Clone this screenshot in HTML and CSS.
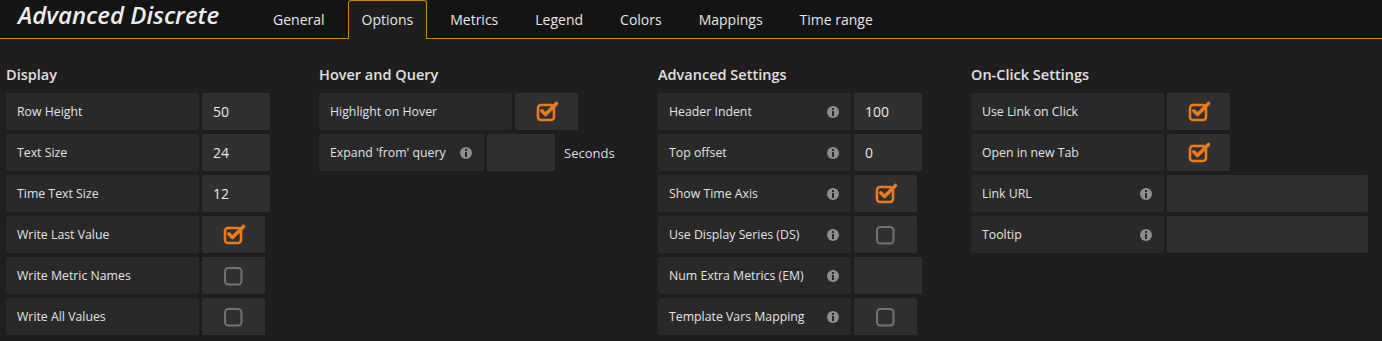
FILE: index.html
```html
<!DOCTYPE html>
<html lang="en">
<head>
    <meta charset="UTF-8">
    <title>Advanced Discrete - Options</title>
    <link rel="stylesheet" href="styles.css">
</head>
<body>
    <div class="panel-header">
        <h1 class="panel-title">Advanced Discrete</h1>
        <ul class="tabs">
            <li class="tab">General</li>
            <li class="tab active">Options</li>
            <li class="tab">Metrics</li>
            <li class="tab">Legend</li>
            <li class="tab">Colors</li>
            <li class="tab">Mappings</li>
            <li class="tab">Time range</li>
        </ul>
    </div>

    <div class="editor">
        <!-- Display -->
        <div class="section">
            <h5 class="section-heading">Display</h5>
            <div class="form-row"><span class="label w-193">Row Height</span><span class="input">50</span></div>
            <div class="form-row"><span class="label w-193">Text Size</span><span class="input">24</span></div>
            <div class="form-row"><span class="label w-193">Time Text Size</span><span class="input">12</span></div>
            <div class="form-row"><span class="label w-193">Write Last Value</span><span class="check on"></span></div>
            <div class="form-row"><span class="label w-193">Write Metric Names</span><span class="check"></span></div>
            <div class="form-row"><span class="label w-193">Write All Values</span><span class="check"></span></div>
        </div>

        <!-- Hover -->
        <div class="section">
            <h5 class="section-heading">Hover and Query</h5>
            <div class="form-row"><span class="label w-193">Highlight on Hover</span><span class="check on"></span></div>
            <div class="form-row"><span class="label w-165">Expand 'from' query <i class="info"></i></span><span class="input"></span><span class="suffix">Seconds</span></div>
        </div>

        <!-- Advanced -->
        <div class="section">
            <h5 class="section-heading">Advanced Settings</h5>
            <div class="form-row"><span class="label w-193">Header Indent <i class="info"></i></span><span class="input">100</span></div>
            <div class="form-row"><span class="label w-193">Top offset <i class="info"></i></span><span class="input">0</span></div>
            <div class="form-row"><span class="label w-193">Show Time Axis <i class="info"></i></span><span class="check on"></span></div>
            <div class="form-row"><span class="label w-193">Use Display Series (DS) <i class="info"></i></span><span class="check"></span></div>
            <div class="form-row"><span class="label w-193">Num Extra Metrics (EM) <i class="info"></i></span><span class="input"></span></div>
            <div class="form-row"><span class="label w-193">Template Vars Mapping <i class="info"></i></span><span class="check"></span></div>
        </div>

        <!-- On click -->
        <div class="section">
            <h5 class="section-heading">On-Click Settings</h5>
            <div class="form-row"><span class="label w-193">Use Link on Click</span><span class="check on"></span></div>
            <div class="form-row"><span class="label w-193">Open in new Tab</span><span class="check on"></span></div>
            <div class="form-row"><span class="label w-193">Link URL <i class="info"></i></span><span class="input wide"></span></div>
            <div class="form-row"><span class="label w-193">Tooltip <i class="info"></i></span><span class="input wide"></span></div>
        </div>
    </div>
</body>
</html>
```

FILE: styles.css
```css
body {
    margin: 0;
    background: #1f1d1e;
    color: #dedede;
    font-family: 'Open Sans', 'Liberation Sans', sans-serif;
    font-size: 13px;
}

/* header + tabs */
.panel-header {
    display: flex;
    align-items: flex-end;
    height: 38px;
    background: #141414;
    border-bottom: 1px solid #c8860d;
}
.panel-title {
    margin: 0;
    padding: 0 0 6px 18px;
    width: 241px;
    align-self: flex-start;
    font-size: 24px;
    font-style: italic;
    font-weight: 600;
    line-height: 30px;
    color: #ececec;
}
.tabs {
    display: flex;
    gap: 9px;
    list-style: none;
    margin: 0;
    padding: 0;
}
.tab {
    height: 37px;
    line-height: 38px;
    padding: 0 13px;
    font-size: 14px;
    color: #e6e6e6;
    border: 1px solid transparent;
    border-bottom: 0;
    border-radius: 3px 3px 0 0;
    margin-bottom: -1px;
}
.tab.active {
    background: #1f1d1e;
    border-color: #c8860d;
    height: 38px;
}

/* editor */
.editor {
    display: grid;
    grid-template-columns: 313px 339px 313px 1fr;
    padding: 27px 6px 0;
}
.section-heading {
    margin: 0 0 9px;
    font-size: 14.5px;
    font-weight: 600;
    line-height: 18px;
    color: #e0e0e0;
}
.form-row {
    display: flex;
    align-items: center;
    gap: 3px;
    height: 37px;
    margin-bottom: 4px;
}
.label {
    display: flex;
    align-items: center;
    justify-content: space-between;
    box-sizing: border-box;
    height: 37px;
    padding: 0 12px 0 11px;
    background: #292929;
    border-radius: 2px;
    font-size: 12.3px;
    color: #e2e2e2;
}
.w-193 { width: 193px; }
.w-165 { width: 165px; }
.input {
    box-sizing: border-box;
    width: 68px;
    height: 37px;
    line-height: 37px;
    padding-left: 11px;
    background: #303030;
    border-radius: 2px;
    font-size: 14px;
    color: #e8e8e8;
}
.input.wide { width: 201px; }
.suffix {
    margin-left: 6px;
}

/* checkboxes */
.check {
    display: block;
    width: 63px;
    height: 37px;
    background-color: #303030;
    border-radius: 2px;
    background-repeat: no-repeat;
    background-position: 22px 10px;
    background-image: url("data:image/svg+xml,%3Csvg xmlns='http://www.w3.org/2000/svg' width='19' height='19'%3E%3Crect x='1' y='1' width='16.5' height='16.5' rx='3.5' fill='none' stroke='%23737373' stroke-width='2'/%3E%3C/svg%3E");
}
.check.on {
    background-position: 21px 7px;
    background-image: url("data:image/svg+xml,%3Csvg xmlns='http://www.w3.org/2000/svg' width='24' height='22'%3E%3Crect x='2' y='5' width='16' height='15' rx='3' fill='none' stroke='%23eb7b18' stroke-width='2.6'/%3E%3Cpath d='M5.8 10.8 L9.5 14.5 L20.5 3.5' fill='none' stroke='%23eb7b18' stroke-width='3.6' stroke-linecap='round' stroke-linejoin='round'/%3E%3C/svg%3E");
}

/* info icon */
.info {
    display: inline-block;
    width: 12px;
    height: 12px;
    border-radius: 50%;
    background: #8e8e8e;
    position: relative;
}
.info::before {
    content: "";
    position: absolute;
    left: 5px;
    top: 2px;
    width: 2px;
    height: 2px;
    background: #292929;
}
.info::after {
    content: "";
    position: absolute;
    left: 5px;
    top: 5px;
    width: 2px;
    height: 5px;
    background: #292929;
}
```
